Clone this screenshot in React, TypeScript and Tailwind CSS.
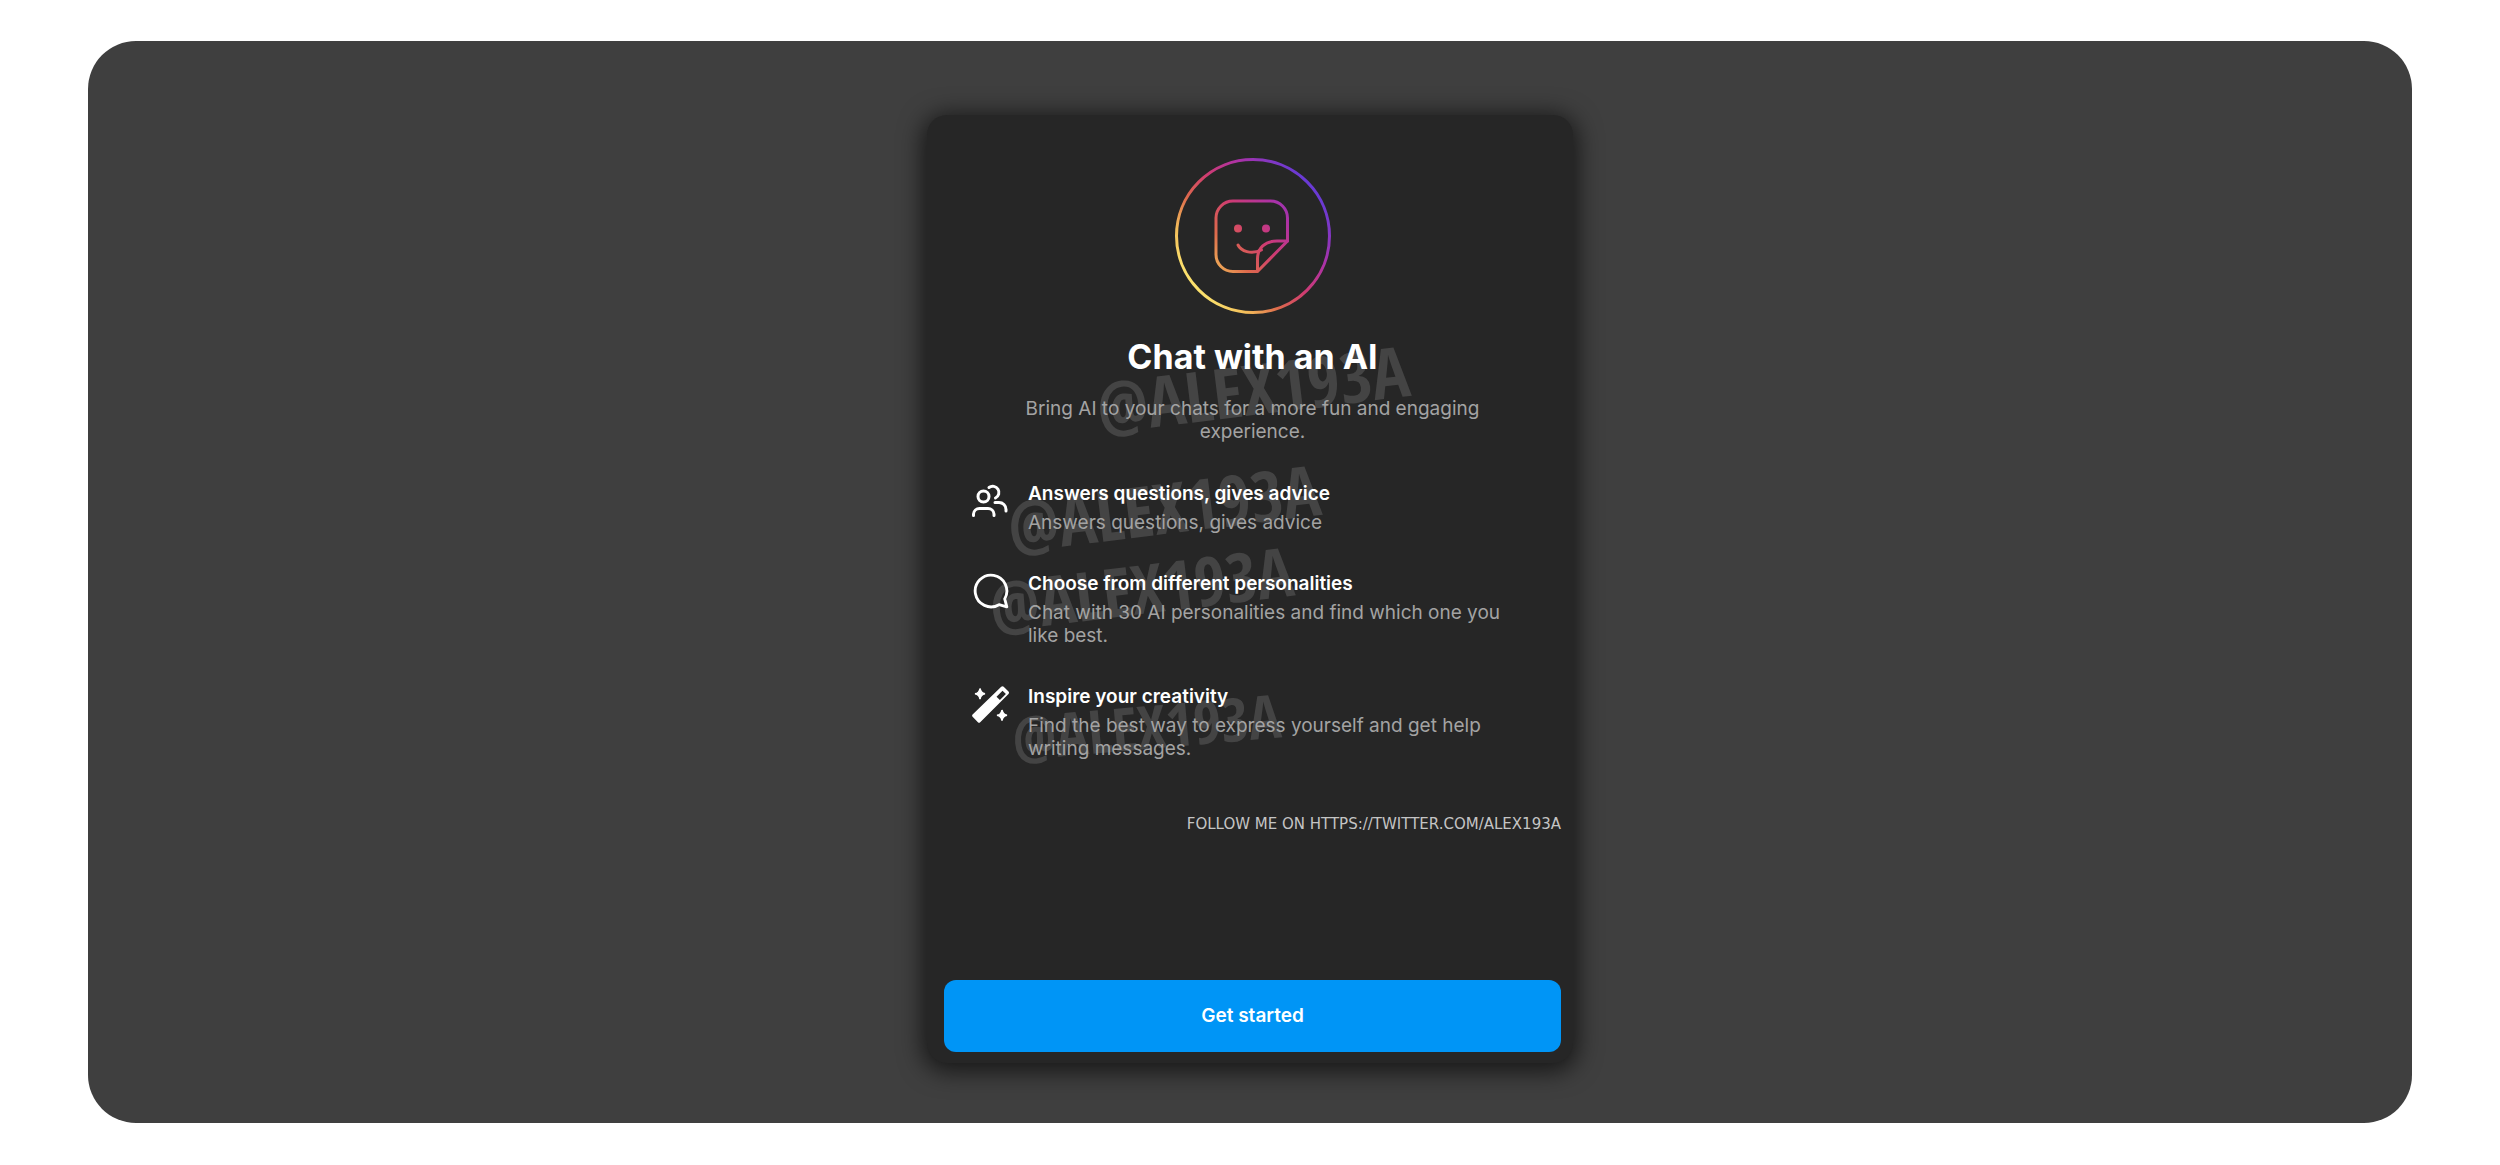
import type { ReactNode } from "react";

interface Feature {
  title: string;
  text: string;
  icon: ReactNode;
}

function StickerLogo() {
  return (
    <svg viewBox="0 0 158 158" className="size-[158px]" fill="none" aria-hidden="true">
      <defs>
        <linearGradient id="sticker" gradientUnits="userSpaceOnUse" x1="22" y1="128" x2="138" y2="32">
          <stop offset="0" stopColor="#fbe06c" />
          <stop offset="0.14" stopColor="#f3bd5a" />
          <stop offset="0.32" stopColor="#dd6a4c" />
          <stop offset="0.52" stopColor="#cf3c70" />
          <stop offset="0.74" stopColor="#ad32a6" />
          <stop offset="1" stopColor="#6a3ad4" />
        </linearGradient>
      </defs>
      <g stroke="url(#sticker)" strokeWidth="3" strokeLinecap="round" strokeLinejoin="round">
        <circle cx="79" cy="79" r="76.5" />
        <path d="M113.5 84V61a17 17 0 0 0-17-17H59a17 17 0 0 0-17 17v36.5a17 17 0 0 0 17 17h24.5L113.5 84Z" />
        <path d="M113.5 84H103C91 84 83.5 91 83.5 102v12" />
        <path d="M64 88c3 6 13 10 23.5 5" />
      </g>
      <circle cx="64" cy="71.5" r="4" fill="url(#sticker)" />
      <circle cx="92" cy="71.5" r="4" fill="url(#sticker)" />
    </svg>
  );
}

function PeopleIcon() {
  return (
    <svg
      viewBox="0 0 38 38"
      className="size-[38px]"
      fill="none"
      stroke="currentColor"
      strokeWidth="3"
      strokeLinecap="round"
      aria-hidden="true"
    >
      <circle cx="11.5" cy="14.5" r="5.5" />
      <path d="M1.5 33.5V32a6 6 0 0 1 6-5.5h8.5a6 6 0 0 1 6 5.500v1.5" />
      <path d="M17 5.5a6.2 6.2 0 1 1 6.500 10.500" />
      <path d="M23 20.5h4a7 7 0 0 1 7 7V29" />
    </svg>
  );
}

function BubbleIcon() {
  return (
    <svg
      viewBox="0 0 24 24"
      className="size-[38px]"
      fill="none"
      stroke="currentColor"
      strokeWidth="1.8"
      strokeLinejoin="round"
      aria-hidden="true"
    >
      <path d="M20.656 17.008a9.993 9.993 0 1 0-3.59 3.615L22 22Z" />
    </svg>
  );
}

function WandIcon() {
  return (
    <svg viewBox="0 0 38 38" className="size-[38px]" fill="currentColor" aria-hidden="true">
      <path
        fillRule="evenodd"
        d="M29.2 1.8q1.400-1 2.500 0l4.800 4.800q1 1.200 0 2.400L8.200 37.200q-1.100 1-2.300 0L.6 31.800q-1-1.200 0-2.300Zm1.300 4-6 6 3.400 3.300 6-6.200Z"
      />
      <path
        d="M8 3.500q.8 4.700 5 5.300-4.200.7-5 5.300-.7-4.600-5-5.300 4.300-.6 5-5.300Z"
        stroke="currentColor"
        strokeWidth="1.5"
      />
      <path
        d="M30 25q.8 4.700 5 5.300-4.200.7-5 5.300-.7-4.600-5-5.300 4.300-.6 5-5.300Z"
        stroke="currentColor"
        strokeWidth="1.5"
      />
    </svg>
  );
}

const features: Feature[] = [
  {
    title: "Answers questions, gives advice",
    text: "Answers questions, gives advice",
    icon: <PeopleIcon />,
  },
  {
    title: "Choose from different personalities",
    text: "Chat with 30 AI personalities and find which one you like best.",
    icon: <BubbleIcon />,
  },
  {
    title: "Inspire your creativity",
    text: "Find the best way to express yourself and get help writing messages.",
    icon: <WandIcon />,
  },
];

const watermarks = [
  "left-[169px] top-[238px] -rotate-7 text-[70px]",
  "left-[80px] top-[357px] -rotate-7 text-[70px]",
  "left-[62px] top-[439px] -rotate-7 text-[68px]",
  "left-[85px] top-[581px] -rotate-5 text-[60px]",
];

export default function App() {
  return (
    <main className="bg-white px-[88px] py-[41px] font-['Inter',sans-serif]">
      <div className="flex justify-center rounded-[48px] bg-[#3f3f3f] pt-[74px] pb-[60px]">
        <section className="relative flex w-full max-w-[646px] flex-col rounded-[20px] bg-[#262626] pt-[42px] pr-3 pb-[11px] pl-[17px] shadow-[0_4px_24px_4px_rgba(0,0,0,0.65)]">
          <div aria-hidden="true" className="pointer-events-none absolute inset-0">
            {watermarks.map((place) => (
              <span
                key={place}
                className={`absolute leading-none font-bold whitespace-nowrap text-[#444] font-['Open_Sans_Condensed','Roboto_Condensed',sans-serif] ${place}`}
              >
                @ALEX193A
              </span>
            ))}
          </div>

          <div className="relative flex flex-col items-center text-center">
            <StickerLogo />
            <h1 className="mt-[22px] text-[34px] leading-10 font-bold text-white">Chat with an AI</h1>
            <p className="mt-5 max-w-[500px] text-[19px] leading-[23px] text-[#a3a3a3]">
              Bring AI to your chats for a more fun and engaging experience.
            </p>
          </div>

          <ul className="relative mt-[39px] flex flex-col gap-[38px] px-7">
            {features.map(({ title, text, icon }) => (
              <li key={title} className="flex gap-[18px]">
                <div className="shrink-0 text-white">{icon}</div>
                <div className="max-w-[490px]">
                  <h2 className="text-[19px] leading-6 font-semibold text-white">{title}</h2>
                  <p className="mt-[5px] text-[19px] leading-[23px] text-[#a3a3a3]">{text}</p>
                </div>
              </li>
            ))}
          </ul>

          <a
            href="https://twitter.com/alex193a"
            className="relative mt-[54px] self-end text-[15px] leading-5 text-[#c4c4c4] font-['DejaVu_Sans',sans-serif]"
          >
            FOLLOW ME ON HTTPS://TWITTER.COM/ALEX193A
          </a>

          <button
            type="button"
            className="relative mt-[146px] h-[72px] rounded-xl bg-[#0095f6] text-[19px] font-semibold text-white"
          >
            Get started
          </button>
        </section>
      </div>
    </main>
  );
}
